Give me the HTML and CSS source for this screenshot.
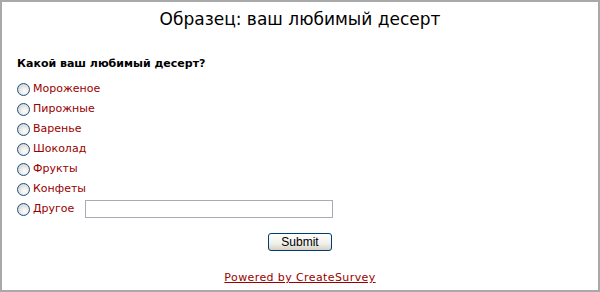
FILE: index.html
```html
<!DOCTYPE html>
<html>
<head>
<meta charset="utf-8">
<link rel="stylesheet" href="styles.css">
</head>
<body>
<div class="frame">
  <h1 class="title">Образец: ваш любимый десерт</h1>
  <form class="survey">
    <div class="question">Какой ваш любимый десерт?</div>
    <ul class="options">
      <li class="option"><input type="radio" name="d" class="radio"><span class="label">Мороженое</span></li>
      <li class="option"><input type="radio" name="d" class="radio"><span class="label">Пирожные</span></li>
      <li class="option"><input type="radio" name="d" class="radio"><span class="label">Варенье</span></li>
      <li class="option"><input type="radio" name="d" class="radio"><span class="label">Шоколад</span></li>
      <li class="option"><input type="radio" name="d" class="radio"><span class="label">Фрукты</span></li>
      <li class="option"><input type="radio" name="d" class="radio"><span class="label">Конфеты</span></li>
      <li class="option"><input type="radio" name="d" class="radio"><span class="label">Другое</span><input type="text" class="other"></li>
    </ul>
  </form>
  <div class="actions"><button type="button" class="submit">Submit</button></div>
  <div class="footer"><a class="powered" href="#">Powered by CreateSurvey</a></div>
</div>
</body>
</html>
```
FILE: styles.css
```css
html, body { margin: 0; padding: 0; background: #fff; }
.frame {
  width: 600px; height: 292px; box-sizing: border-box;
  border: 2px solid #a9a9a9;
  font-family: "DejaVu Sans", Verdana, sans-serif;
}
.title {
  margin: 6px 0 0; text-align: center;
  font-weight: normal; font-size: 17px; line-height: 22px; color: #000;
}
.survey { padding: 0 0 0 15px; }
.question {
  margin-top: 28px; font-size: 11px; font-weight: bold; line-height: 12px; color: #000;
}
.options { list-style: none; margin: 9px 0 0; padding: 0; }
.option { display: flex; align-items: center; height: 20px; }
.radio {
  -webkit-appearance: none; appearance: none; margin: 0 3px 0 0;
  width: 13px; height: 13px; border-radius: 50%; box-sizing: border-box;
  border: 1px solid #1c5180;
  background: radial-gradient(circle at 60% 65%, #ffffff 0%, #e8e8e4 45%, #c4c8cc 100%);
}
.label { font-size: 11px; color: #990000; line-height: 14px; }
.other {
  margin-left: 11px; width: 248px; height: 18px; box-sizing: border-box;
  border: 1px solid #a5acb5; padding: 0; font-size: 11px;
}
.actions { display: flex; justify-content: center; margin-top: 14px; }
.submit {
  width: 64px; height: 18px; box-sizing: border-box; padding: 0;
  border: 1px solid #003c74; border-radius: 3px;
  background: linear-gradient(#ffffff, #f0f0ea 60%, #d6d0c5);
  font-family: "Liberation Sans", Arial, sans-serif; font-size: 12px; color: #000;
}
.footer { text-align: center; margin-top: 15px; }
.powered { font-size: 11px; letter-spacing: 0.4px; color: #990000; text-decoration: underline; }
```
